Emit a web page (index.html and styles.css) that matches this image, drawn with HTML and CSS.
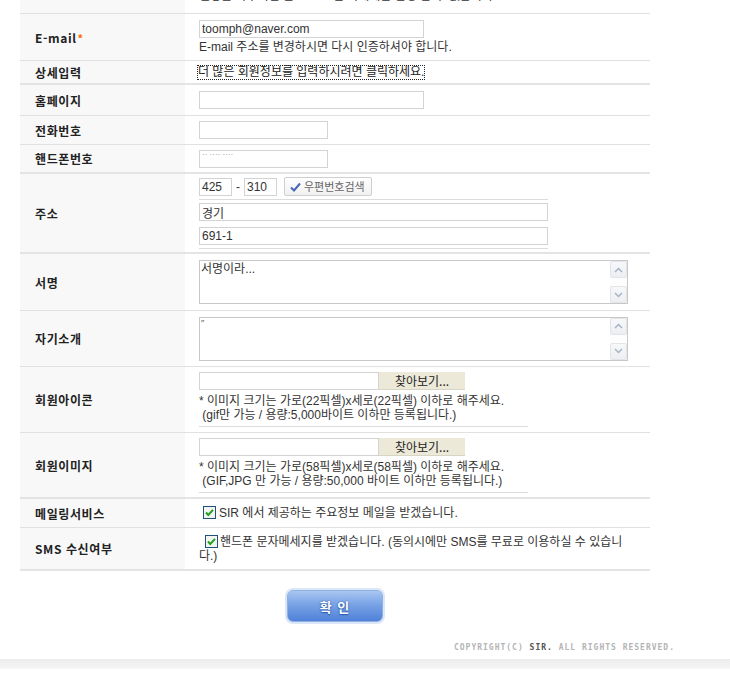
FILE: index.html
```html
<!DOCTYPE html>
<html lang="ko">
<head>
<meta charset="utf-8">
<title>회원정보수정</title>
<link rel="stylesheet" href="styles.css">
</head>
<body>
<div class="page">
<table class="form">
  <tr class="r-top"><th></th><td class="at-bottom">별명을 바꾸시면 앞으로 30일 이내에는 변경 할 수 없습니다.</td></tr>
  <tr class="r-email"><th>E-mail<span class="req">*</span></th>
    <td><input class="inp w224" type="text" value="toomph@naver.com"><div class="note">E-mail 주소를 변경하시면 다시 인증하셔야 합니다.</div></td></tr>
  <tr class="r-more thick"><th>상세입력</th><td><span class="more">더 많은 회원정보를 입력하시려면 클릭하세요.</span></td></tr>
  <tr class="r-home"><th>홈페이지</th><td><input class="inp w224" type="text"></td></tr>
  <tr class="r-tel"><th>전화번호</th><td><input class="inp w128" type="text"></td></tr>
  <tr class="r-hp thick"><th>핸드폰번호</th><td><input class="inp w128 masked" type="text" value="·· ···· ····"></td></tr>
  <tr class="r-addr thick"><th>주소</th>
    <td>
      <div class="zip">
        <input class="inp w32" type="text" value="425"><span class="dash">-</span><input class="inp w32" type="text" value="310">
        <span class="zipbtn"><svg width="11" height="10" viewBox="0 0 11 10"><path d="M1 5.5 L4 8.5 L10 1.5" fill="none" stroke="#4766b4" stroke-width="2"/></svg>우편번호검색</span>
      </div>
      <div class="sep w348"></div>
      <input class="inp w348 addr" type="text" value="경기">
      <input class="inp w348 addr" type="text" value="691-1">
      <div class="sep w348"></div>
    </td></tr>
  <tr class="r-sign"><th>서명</th>
    <td><div class="ta"><div class="ta-text">서명이라...</div><div class="sb"><span class="sbb"><svg width="9" height="6" viewBox="0 0 9 6"><path d="M1 5 L4.5 1.5 L8 5" fill="none" stroke="#a9b3c4" stroke-width="1.5"/></svg></span><span class="sbb"><svg width="9" height="6" viewBox="0 0 9 6"><path d="M1 1 L4.5 4.5 L8 1" fill="none" stroke="#a9b3c4" stroke-width="1.5"/></svg></span></div></div></td></tr>
  <tr class="r-intro"><th>자기소개</th>
    <td><div class="ta"><div class="ta-text small">″</div><div class="sb"><span class="sbb"><svg width="9" height="6" viewBox="0 0 9 6"><path d="M1 5 L4.5 1.5 L8 5" fill="none" stroke="#a9b3c4" stroke-width="1.5"/></svg></span><span class="sbb"><svg width="9" height="6" viewBox="0 0 9 6"><path d="M1 1 L4.5 4.5 L8 1" fill="none" stroke="#a9b3c4" stroke-width="1.5"/></svg></span></div></div></td></tr>
  <tr class="r-file"><th>회원아이콘</th>
    <td><div class="file"><span class="inp w179"></span><span class="browse">찾아보기...</span></div>
      <div class="note">* 이미지 크기는 가로(22픽셀)x세로(22픽셀) 이하로 해주세요.<br>&nbsp;(gif만 가능 / 용량:5,000바이트 이하만 등록됩니다.)</div>
      <div class="sep w329"></div></td></tr>
  <tr class="r-file thick"><th>회원이미지</th>
    <td><div class="file"><span class="inp w179"></span><span class="browse">찾아보기...</span></div>
      <div class="note">* 이미지 크기는 가로(58픽셀)x세로(58픽셀) 이하로 해주세요.<br>&nbsp;(GIF,JPG 만 가능 / 용량:50,000 바이트 이하만 등록됩니다.)</div>
      <div class="sep w329"></div></td></tr>
  <tr class="r-mail"><th>메일링서비스</th>
    <td><span class="cb"><svg width="13" height="13" viewBox="0 0 13 13"><rect x="0.5" y="0.5" width="12" height="12" fill="#f4f4f0" stroke="#1c5180"/><path d="M3 6.5 L5.3 9 L10 3.8" fill="none" stroke="#21a121" stroke-width="2"/></svg></span>SIR 에서 제공하는 주요정보 메일을 받겠습니다.</td></tr>
  <tr class="r-sms thick"><th>SMS 수신여부</th>
    <td><span class="cb cb2"><svg width="13" height="13" viewBox="0 0 13 13"><rect x="0.5" y="0.5" width="12" height="12" fill="#f4f4f0" stroke="#1c5180"/><path d="M3 6.5 L5.3 9 L10 3.8" fill="none" stroke="#21a121" stroke-width="2"/></svg></span>핸드폰 문자메세지를 받겠습니다. (동의시에만 SMS를 무료로 이용하실 수 있습니다.)</td></tr>
</table>

<div class="actions"><span class="okbtn">확 인</span></div>

<div class="foot">COPYRIGHT(C) <b>SIR.</b> ALL RIGHTS RESERVED.</div>
<div class="band"></div>
</div>
</body>
</html>
```

FILE: styles.css
```css
* { box-sizing: border-box; }
body {
  margin: 0;
  background: #fff;
  font-family: "Liberation Sans", "Noto Sans CJK KR", sans-serif;
  font-size: 12px;
  color: #333;
}
.page { width: 730px; margin-top: -21px; }

.form {
  margin-left: 20px;
  width: 630px;
  border-collapse: separate;
  border-spacing: 0;
}
.form th {
  width: 165px;
  background: #f8f8f8;
  text-align: left;
  padding: 0 0 0 15px;
  font-family: "Noto Sans CJK KR", sans-serif;
  font-weight: bold;
  font-size: 12px;
  color: #222;
  letter-spacing: 0.6px;
  border-bottom: 1px solid #e1e1e1;
  vertical-align: middle;
}
.form td {
  padding: 0 15px 0 14px;
  border-bottom: 1px solid #e1e1e1;
  vertical-align: middle;
  line-height: 14px;
  color: #333;
}
.form tr.thick th, .form tr.thick td { border-bottom: 2px solid #e4e4e4; }
.form td.at-bottom { vertical-align: bottom; padding-bottom: 10px; }

.r-top { height: 35px; }
.r-email { height: 47px; }
.r-more { height: 24px; }
.r-home { height: 31px; }
.r-tel { height: 29px; }
.r-hp { height: 29px; }
.r-addr { height: 80px; }
.r-sign { height: 57px; }
.r-intro { height: 56px; }
.r-file { height: 66px; }
.r-mail { height: 29px; }
.r-sms { height: 43px; }

.req { color: #ff6a00; font-size: 11px; margin-left: 1px; }

.inp {
  display: block;
  height: 18px;
  border: 1px solid #d3d3d3;
  background: #fff;
  padding: 0 2px;
  font-family: "Liberation Sans", "Noto Sans CJK KR", sans-serif;
  font-size: 12px;
  color: #333;
  outline: none;
}
.w224 { width: 225px; }
.w128 { width: 129px; }
.w32 { width: 33px; }
.w348 { width: 349px; }
.w179 { width: 180px; }
.w329 { width: 329px; }
.masked { color: #888; font-size: 8px; padding-bottom: 8px; }

.note { margin-top: 2px; }
.more {
  display: inline-block;
  outline: 1px dotted #222;
  color: #222;
  line-height: 13px;
  margin-left: -1px;
}

.zip { display: flex; align-items: center; height: 19px; }
.zip .inp { display: inline-block; }
.dash { width: 12px; text-align: center; color: #333; }
.zipbtn {
  display: inline-flex;
  align-items: center;
  gap: 3px;
  margin-left: 7px;
  height: 19px;
  padding: 0 6px 0 5px;
  border: 1px solid #cfcfcf;
  border-radius: 2px;
  background: linear-gradient(#ffffff, #f1f1f1);
  color: #666;
  font-size: 11px;
}
.sep { border-top: 1px solid #dcdcdc; margin-top: 3px; }
.addr { margin-top: 3px; }
.addr + .addr { margin-top: 6px; }

.ta {
  display: flex;
  width: 429px;
  height: 44px;
  border: 1px solid #c8c8c8;
  background: #fff;
}
.ta-text { flex: 1; padding: 1px 0 0 1px; line-height: 14px; color: #333; }
.ta-text.small { font-size: 9px; line-height: 9px; color: #555; }
.sb {
  width: 17px;
  display: flex;
  flex-direction: column;
  justify-content: space-between;
  background: #fdfdfd;
}
.sbb {
  height: 17px;
  display: flex;
  align-items: center;
  justify-content: center;
  border: 1px solid #e2e4e8;
  border-radius: 2px;
  background: linear-gradient(#f7f8fa, #eceef2);
}

.file { display: flex; height: 18px; }
.file .inp { display: block; }
.browse {
  width: 86px;
  height: 18px;
  background: #ece9d8;
  border-bottom: 1px solid #d8d5c4;
  text-align: center;
  line-height: 17px;
  color: #222;
  font-family: "Noto Sans CJK KR", sans-serif;
}
.file + .note { margin-top: 4px; }
.r-file .sep { margin-top: 4px; }

.cb { display: inline-block; width: 13px; height: 13px; margin: 0 3px 0 4px; vertical-align: -2px; }
.cb svg { display: block; }
.cb2 { margin-left: 6px; margin-right: 2px; }

.actions {
  display: flex;
  justify-content: center;
  margin-left: 20px;
  width: 630px;
  padding-top: 19px;
  height: 72px;
}
.okbtn {
  display: flex;
  align-items: center;
  justify-content: center;
  width: 96px;
  height: 32px;
  border-radius: 6px;
  border: 1px solid #8fb0e2;
  box-shadow: 0 0 0 2px #dbe7f8;
  background: linear-gradient(#a9c6f1 0%, #79a3e6 45%, #4f81d8 100%);
  color: #fff;
  font-family: "Noto Sans CJK KR", sans-serif;
  font-weight: bold;
  font-size: 13px;
  letter-spacing: 1px;
  text-shadow: 0 0 2px #2c5aa8, 0 1px 1px #2c5aa8;
}

.foot {
  text-align: right;
  padding-right: 55px;
  height: 16px;
  font-family: "DejaVu Sans Mono", monospace;
  font-weight: bold;
  font-size: 8px;
  letter-spacing: 1px;
  color: #b4b4b4;
  line-height: 9px;
}
.foot b { color: #555; }
.band {
  height: 10px;
  background: linear-gradient(#ececec, #f6f6f6);
}
```
